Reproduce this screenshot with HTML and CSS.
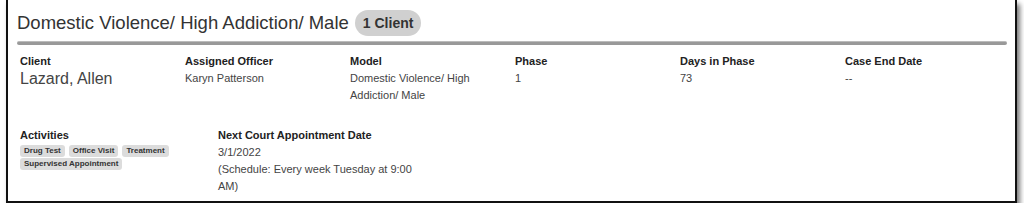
FILE: index.html
```html
<!DOCTYPE html>
<html lang="en">
<head>
  <meta charset="UTF-8">
  <title>Caseload</title>
  <link rel="stylesheet" href="styles.css">
</head>
<body>
  <div class="card">
    <div class="card-head">
      <h1>Domestic Violence/ High Addiction/ Male</h1>
      <span class="count">1 Client</span>
    </div>
    <div class="divider"></div>
    <div class="details">
      <div class="field">
        <div class="label">Client</div>
        <div class="value big">Lazard, Allen</div>
      </div>
      <div class="field">
        <div class="label">Assigned Officer</div>
        <div class="value">Karyn Patterson</div>
      </div>
      <div class="field">
        <div class="label">Model</div>
        <div class="value">Domestic Violence/ High Addiction/ Male</div>
      </div>
      <div class="field">
        <div class="label">Phase</div>
        <div class="value">1</div>
      </div>
      <div class="field">
        <div class="label">Days in Phase</div>
        <div class="value">73</div>
      </div>
      <div class="field">
        <div class="label">Case End Date</div>
        <div class="value">--</div>
      </div>
    </div>
    <div class="details-2">
      <div class="field activities">
        <div class="label">Activities</div>
        <div class="tags">
          <span class="tag">Drug Test</span>
          <span class="tag">Office Visit</span>
          <span class="tag">Treatment</span>
          <span class="tag">Supervised Appointment</span>
        </div>
      </div>
      <div class="field court">
        <div class="label">Next Court Appointment Date</div>
        <div class="value">3/1/2022<br>(Schedule: Every week Tuesday at 9:00 AM)</div>
      </div>
    </div>
  </div>
</body>
</html>
```

FILE: styles.css
```css
body {
  font-family: Arial, "Liberation Sans", sans-serif;
  background: #fff;
  color: #333;
  margin: 0;
  padding: 0 7px 0 6px;
}
.card {
  border: 2px solid #111;
  border-top-width: 1px;
  margin-top: -1px;
  height: 204px;
  box-sizing: border-box;
  padding: 10px 8px 0 9px;
  box-shadow: 3px 5px 5px #0008;
}
.card-head {
  display: flex;
  align-items: center;
  gap: 6px;
  height: 26px;
}
h1 {
  font-size: 18.5px;
  font-weight: normal;
  margin: 0;
  color: #333;
}
.count {
  background: #d0d0d0;
  border-radius: 13px;
  padding: 5px 8px;
  font-size: 14px;
  font-weight: bold;
  color: #333;
}
.divider {
  height: 3px;
  background: #999;
  border-top: 1px solid #bbb;
  border-radius: 2px;
  margin: 5px 0 0 0;
}
.details {
  display: grid;
  grid-template-columns: repeat(6, 165px);
  padding: 10px 0 0 3px;
  height: 64px;
}
.label {
  font-size: 11px;
  font-weight: bold;
  color: #222;
  line-height: 13px;
}
.value {
  font-size: 11px;
  color: #444;
  line-height: 17px;
  margin-top: 2px;
  padding-right: 28px;
}
.value.big {
  font-size: 16px;
  line-height: 18px;
}
.details-2 {
  display: flex;
  padding: 10px 0 0 3px;
}
.activities {
  width: 198px;
}
.court {
  width: 210px;
}
.court .value {
  padding-right: 0;
}
.tags {
  display: flex;
  flex-wrap: wrap;
  gap: 1px 4px;
  margin-top: 3px;
  width: 160px;
}
.tag {
  background: #dcdcdc;
  border-radius: 3px;
  font-size: 8px;
  font-weight: bold;
  color: #333;
  padding: 1px 4px;
  line-height: 10px;
}
```
